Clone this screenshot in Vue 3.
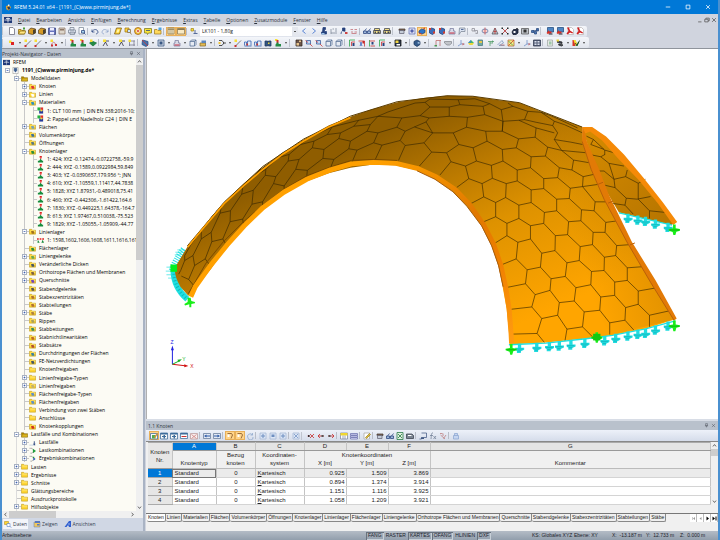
<script setup>
const navy = '#27427c'
const grey = '#7c8796'
// every glyph is a list of [fill, stroke, path] on a 16 x 16 grid
const glyphs = {
  Neu: [['#fff', '#667', 'M3 1h7l3 3v11H3z']],
  Öffnen: [['#f5c636', '#8a6a10', 'M1 14V5h5l2 2h5v7z'], ['#ffe680', '#8a6a10', 'M1 14l3-6h12l-3 6z'], ['#4a9b3c', 'none', 'M10 1h4v4h-4z']],
  Modell: [['#d59a28', '#59452a', 'M1 6l5-4 9 2v8l-6 3-8-2z'], ['#49412f', 'none', 'M10 6l5-2v8l-5 3z']],
  Speichern: [['#6874bd', '#38447f', 'M1 2h14v13H1z'], ['#eef', 'none', 'M4 2h8v5H4zM4 10h8v5H4z']],
  Kopie: [['#ddd6cb', '#8c7767', 'M2 2h12v12H2z'], ['#8c7767', 'none', 'M4 4h8v3H4z']],
  Drucken: [['#e7ecf5', grey, 'M4 1h8v5H4zM1 6h14v6H1zM4 10h9v5H4z']],
  Vorschau: [['#fff', grey, 'M2 1h9v13H2z'], ['#a9d6ee', navy, 'M7 7h6v5H7zM12 12l3 3']],
  Rückgängig: [['none', navy, 'M2 5v5h5M2 10c2-6 11-7 12 0 0 2-1 3-4 4']],
  Wiederholen: [['none', '#8ba0c7', 'M14 5v5H9M14 10C12 4 3 3 2 10c0 2 1 3 4 4']],
  Fläche: [['#ffd43a', '#7b5a10', 'M1 14L5 2h10l-4 12z'], ['#fff7b0', 'none', 'M5 11l2-6h4l-2 6z']],
  Suche: [['#ffd43a', '#a07818', 'M2 2h8v8H2z'], ['#c8e4ff', '#8a6a30', 'M7 5h6v6H7zM12 11l3 4']],
  Kreis: [['#f4c52f', '#9c5b18', 'M8 1a7 7 0 100 14A7 7 0 008 1z'], ['#d33b2a', '#fff', 'M8 5a3 3 0 100 6 3 3 0 000-6z']],
  Notiz: [['#f8e33a', '#7d781e', 'M1 3h14v9H9l-2 3-1-3H1z'], ['none', navy, 'M4 7h8']],
  Ordner: [['#ffd95b', '#a07c20', 'M1 14V5h5l2 2h6v7z'], ['#4fa2e0', 'none', 'M9 1h6v5H9z']],
  Tabelle: [['#fff5d6', '#8c7a52', 'M2 2h12v12H2z'], ['none', '#8c7a52', 'M2 5h12M6 2v12M10 2v12']],
  Fenster: [['#f8e9c4', '#8c7a52', 'M1 3h14v11H1z'], ['#8c7a52', 'none', 'M1 3h14v3H1z']],
  Lastfall: [['#f9dd38', '#a48a20', 'M2 3h5v5H2z'], [navy, navy, 'M10 6v6M7 13h8']],
  Zurück: [['none', '#2b63c9', 'M11 3L5 8l6 5']],
  Weiter: [['none', '#2b63c9', 'M5 3l6 5-6 5']],
  Last: [[navy, navy, 'M6 1h5v4H9v4h4v5H3v-4h2z'], ['#9cc3e6', 'none', 'M3 12h6v3H3z']],
  Maß: [['none', grey, 'M2 4v10M2 12h12M5 4h3M10 4h4M10 8h4']],
  Zeiger: [[navy, navy, 'M5 2h5v6H5zM3 9l-1 5M9 9l5 4'], ['#c44', 'none', 'M10 10h5v4h-5z']],
  Werte: [['none', '#c06a70', 'M1 5h5M9 5h5M2 10h4M9 10h5M3 13h10']],
  Brille: [['#9db6da', navy, 'M1 8h6v5H1zM9 8h6v5H9zM3 8l4-5M11 8l4-5']],
  Drucker: [['#f2df86', '#3d4350', 'M3 3h10v4H3zM1 7h14v6H1z'], ['#3d4350', 'none', 'M3 9h3v3H3zM9 9h4v3H9z']],
  Box: [['#7c6656', '#4a3c34', 'M2 4h12v3H2z'], ['#c4ccd8', '#667', 'M3 7h9v6H3z']],
  Raute: [['#dcdff2', '#6674b4', 'M2 2h12v12H2z'], ['#5261ad', 'none', 'M8 4l4 4-4 4-4-4z']],
  Körper: [['#2f75c8', '#1d447c', 'M2 8l5-4 7 2v5l-6 3-6-2z'], ['#d93b2a', 'none', 'M2 11l5 2v2l-5-2zM9 3l5-2v3z']],
  Würfel: [['#3a6db9', '#1e3f78', 'M3 5l4-3 6 2v8l-4 3-6-3z'], ['#db3b2c', 'none', 'M2 2h4v4H2zM10 9h4v4h-4z']],
  Profil: [['#d8dbe8', '#7c7fa0', 'M4 3h7v5h3v6H2V8h2z'], ['#c34', 'none', 'M3 11h10v2H3z']],
  Fahne: [['#dce4f2', grey, 'M3 2h11v7H6l-4 6z'], ['none', navy, 'M6 5h5']],
  Kette: [['none', '#8b8b94', 'M2 3h5v5H2zM8 7h5v6H9M6 7l4 4']],
  Spiegel: [['#f6d3d0', '#5874a6', 'M2 8a6 4 0 1012 0A6 4 0 002 8z'], ['none', '#c44', 'M8 1v14']],
  Dreieck: [['#bfc2c9', '#50545e', 'M8 2l6 12H2z'], ['none', '#b33', 'M8 2v12M5 9h6']],
  Kreuz: [['none', '#aa2222', 'M2 2l12 12M14 2L2 14'], ['#222', 'none', 'M1 1h3v3H1zM12 1h3v3h-3zM1 12h3v3H1zM12 12h3v3h-3z']],
  Ring: [['#27334e', '#10182c', 'M5 5h9v7l-4 3H4l-2-5z'], ['#fff', 'none', 'M5 8h4v4H5z'], ['none', '#222', 'M9 5l3-3 3 3']],
  Kamera: [['#bfc3c9', '#555', 'M1 3h14v11H1z'], ['#333', 'none', 'M5 5h6v6H5z']],
  Gelenk: [['#4b78b8', '#294a7c', 'M1 7h5v4H1zM7 9h4v5H7zM11 3h4v5h-4zM5 8l8-2']],
  Export: [['#4d86c4', '#214b7d', 'M3 1h12v9H3z'], ['#d93025', 'none', 'M1 12l5-6v3h5v4H5v2z'], ['#223', 'none', 'M6 13h7v2H6z']],
  PDF: [['#fff', '#bcb4b4', 'M4 1h7l4 4v10H4z'], ['#cf2020', 'none', 'M2 1h4l2 6 6 4-1 2-5-2-5 4-2-2 4-5z']],
  Knoten: [['#f6df35', 'none', 'M2 3h5v5H2z'], ['#d22', 'none', 'M6 6h6v6H6z']],
  Linie: [['#f6df35', 'none', 'M1 1h5v5H1z'], ['none', '#555', 'M3 14L14 3'], ['#c33', 'none', 'M1 12h4v4H1z']],
  Bogen: [['#f6df35', 'none', 'M1 1h5v5H1z'], ['none', '#b66', 'M3 13c1-8 7-9 8-1'], ['#c33', 'none', 'M2 11h4v4H2zM10 10h4v4h-4z']],
  Lager: [['#f6df35', 'none', 'M2 0h5v4H2z'], ['#cc2f28', 'none', 'M5 2h4v6H5z'], ['#238b45', 'none', 'M7 6l3 4h4v5H3v-4z']],
  Bettung: [['#238b45', '#177235', 'M1 8l7-3 7 3-7 6z'], ['#f6df35', 'none', 'M2 1h5v5H2z']],
  Stab: [['#f6df35', 'none', 'M2 1h6v5H2z'], ['none', '#223', 'M2 14l5-8 4 8M8 4h6']],
  Gitter: [['none', '#778', 'M3 3v11M12 3v11M2 4h12M2 12h12'], ['#f6df35', 'none', 'M1 1h5v5H1z']],
  Netz: [['#4974ac', '#284d82', 'M3 2l11 3v7l-4 3-8-4z'], ['none', '#c33', 'M2 2l12 12']],
  Rahmen: [['#cbd3e1', '#395884', 'M2 2h12v12H2z'], ['#395884', 'none', 'M5 5h6v6H5z']],
  Ebene: [['#e3ba52', '#876e32', 'M2 8h11v6H2z'], ['#5d86bd', 'none', 'M5 3h9v5H5z']],
  Strahl: [['none', '#222', 'M2 3h6l4 5-4 5H2M10 8h6'], ['#f5c636', 'none', 'M1 6h4v4H1z']],
  Linienlast: [['none', '#295bb1', 'M1 13V6h4v7M7 13V4h7v9M1 14h14'], ['#d6342a', 'none', 'M5 9h3v4H5z']],
  Fernglas: [['#335685', '#1d385f', 'M2 4h5v10H2zM9 4h5v10H9zM6 6h4'], ['#e7d339', 'none', 'M8 7h3v3H8z']],
  Gitternetz: [['#6d574c', '#34271f', 'M2 2h12v12H2z'], ['#e6c48d', 'none', 'M3 8h5v5H3zM8 3h4v3H8z']],
  Lupe: [['#c1d6f2', '#345a98', 'M3 3h8v7H3z'], ['none', '#c33', 'M10 10l5 5M1 3l5 4']],
  Quader: [['#e6ebf3', '#526c93', 'M2 5h9v9H2zM2 5l3-3h9v9l-3 3M11 5l3-3']],
  AchseX: [['none', '#23a33d', 'M3 15V2h11'], ['none', '#c92828', 'M7 14V6h7'], [navy, 'none', 'M9 8h4v6H9z']],
  AchseY: [['none', '#c92828', 'M1 4h12v11'], ['none', '#214fb5', 'M4 6l4 8M8 6l-4 8'], ['#c92828', 'none', 'M9 4h4v5H9z']],
  AchseZ: [['none', '#23a33d', 'M3 15V2'], ['none', '#c92828', 'M3 4h11M5 14h9'], [navy, 'none', 'M7 6h4v5H7z']],
  Ansicht: [['#2d394c', '#111', 'M2 2h12v12H2z'], ['#f2d645', 'none', 'M3 3h6v5H3z'], ['#fff', 'none', 'M5 10h7v3H5z']],
  Kugel: [['#345b8c', '#1b375c', 'M8 2l6 3v6l-6 4-6-4V5z'], ['#a9c8e6', 'none', 'M8 8l5-3v5z']],
  Schnitt: [['none', '#b66', 'M4 14V3h10M12 3v11'], ['#499854', 'none', 'M1 12h5v3H1z']],
  Schild: [['#c2c5ca', '#83878e', 'M1 5h14v4l-4 3H6L1 8z']],
  Koordinaten: [['none', '#688bc5', 'M8 2v8l-6 4M8 10h7'], ['#c66', 'none', 'M11 8l4 2-4 3z']],
  Farben: [['#43b86b', 'none', 'M8 2l6 6H2z'], ['#ecd83d', 'none', 'M2 8h12l-3 4H5z'], ['#3f84cc', 'none', 'M2 8l6-6v5z']],
  Zellen: [['#6ea9a3', '#49767c', 'M2 2h9v11H2z'], ['#e4c64c', 'none', 'M4 4h6v4H4z']],
  Pfeil: [['none', '#4c9a63', 'M2 5h12M6 5v9M6 8h6M11 3v4']],
  Skizze: [['none', '#7893b8', 'M1 12l9-9 3 5-9 5h11'], ['none', '#bd6c6c', 'M7 12h8']],
  Palette: [['#f3ec86', '#b46a35', 'M2 2h12v12H2z'], ['none', '#d6342a', 'M3 13L14 2'], ['none', '#3a9b4a', 'M3 4l9 9']],
  Raster: [['#566078', '#303950', 'M1 2h14v12H1z'], ['#d9e0ed', 'none', 'M3 4h4v3H3zM9 4h4v3H9zM3 9h4v3H3zM9 9h4v3H9z']],
  Blatt: [['#e6e9e5', '#a2aaa6', 'M3 2h10v12H3z'], ['#9dc7a9', 'none', 'M6 5h5v6H6z']],
  Schrauben: [['#424c5b', '#222', 'M3 4l9 2v3L3 7zM6 10l8 2-3 2-6-2z'], ['#e7d339', 'none', 'M1 1h5v4H1z']],
  Spektrum: [['#d6342a', 'none', 'M1 2h5l4 8-4 4H1z'], ['#f4df32', 'none', 'M3 2h4l3 7-3 5z'], ['#3aa349', 'none', 'M7 14l5-8 3-1-4 9z'], ['none', '#222', 'M6 8l4 5 5-10']],
  Bearbeiten: [['#f8f8f8', '#3e6c9b', 'M1 3h14v11H1z'], ['#55aa4c', 'none', 'M4 6h7v7H4z'], ['#d1923d', 'none', 'M8 10l6-8 2 2-6 8z']],
  Spalte: [['#f8f8f8', '#3e6c9b', 'M1 2h14v12H1z'], ['#3e6c9b', 'none', 'M1 2h14v3H1zM7 6h3v7H7zM4 8h8v2H4z']],
  Zeile: [['#fff', '#3e6c9b', 'M1 2h14v11H1z'], ['#3e6c9b', 'none', 'M1 2h14v3H1z'], ['#c33', 'none', 'M3 8h10v2H3z']],
  ZeileX: [['#f7eeee', '#b99', 'M1 3h14v11H1z'], ['none', '#c77', 'M3 5l10 8M13 5L3 13']],
  NachLinks: [['#e3eaf5', '#64799b', 'M1 3h14v10H1z'], ['#2d59a6', 'none', 'M7 5v6L2 8zM7 7h7v2H7z']],
  NachRechts: [['#e3eaf5', '#64799b', 'M1 3h14v10H1z'], ['#2d59a6', 'none', 'M9 5v6l5-3zM2 7h7v2H2z']],
  Haken: [['none', '#7a4b22', 'M3 3h8l2 3-3 7'], ['#fff', 'none', 'M3 5h4v5H3z']],
  Kreislauf: [['none', '#8ba6cb', 'M13 6A5 5 0 104 12M13 2v4H9M4 12a5 5 0 0010-2']],
  Plus: [['#dce6f6', '#a4b6d3', 'M2 2h12v12H2z'], ['#6d8ec0', 'none', 'M7 4h2v8H7zM4 7h8v2H4z']],
  Minus: [['#dce6f6', '#a4b6d3', 'M2 2h12v12H2z'], ['#6d8ec0', 'none', 'M5 5h6v5H5z']],
  Löschen: [['#dce6f6', '#a4b6d3', 'M2 2h12v12H2z'], ['none', '#6d8ec0', 'M4 4l8 8M12 4l-8 8']],
  RotX: [['none', '#c42323', 'M1 8h5M6 4l8 8M14 4l-8 8'], ['#333', 'none', 'M2 6h3v4H2z']],
  RotLinks: [['none', '#c42323', 'M2 8h12M6 4L2 8l4 4'], ['#555', 'none', 'M9 6h4v4H9z']],
  RotRechts: [['none', '#c42323', 'M2 8h12M10 4l4 4-4 4'], ['#555', 'none', 'M3 6h4v4H3z']],
  Kopfzeile: [['#fff', '#7b86a0', 'M1 2h14v12H1z'], ['#f1d72e', 'none', 'M1 2h14v5H1z'], ['none', '#7b86a0', 'M6 7v7M10 7v7']],
  Zeilen: [['#e2e4ff', '#6b70ac', 'M1 3h14v3H1zM1 7h14v3H1zM1 11h14v3H1z']],
  Stift: [['#fff', '#aaa', 'M2 2h11v12H2z'], ['#e0c23d', '#998030', 'M5 11l8-8 2 2-8 8z']],
  Excel: [['#dff0df', '#207641', 'M2 1h12v14H2z'], ['none', '#19733a', 'M4 4l8 8M12 4l-8 8']],
  Formel: [['none', '#6f7e94', 'M8 2c-4-1-3 5-4 12M2 7h6M9 8l5 6M14 8l-5 6']],
  FormelX: [['none', '#b77', 'M2 3h5M3 6l9 8M14 6l-5 7M8 3v5']],
  Tafel: [['#7b8492', '#39404c', 'M1 4h11l3 3v6H1z'], ['#fff', 'none', 'M4 6h7v2H4z']],
  Kurve: [['none', '#445a84', 'M5 2h10v9H5v3H1'], ['#445a84', 'none', 'M4 11h6v3H4z']],
  Schloss: [['#c5d5f0', '#8ca6d1', 'M3 7h10v7H3zM5 7V3h6v4']],
}
// "|" separator, "‖" new bar, "v" drop-down arrow, "*" pressed, "[]" load case box
const bar1 = 'Neu Öffnen Modell Modell Speichern Kopie Drucken Vorschau | Rückgängig Wiederholen | Fläche Suche Kreis Notiz Ordner | Tabelle* Fenster* | Lastfall [] Zurück Weiter Last Maß Zeiger Werte | Brille Drucker Drucker ‖ Box Raute Körper* Würfel Würfel Profil Fahne | Kette Spiegel Dreieck Kreuz Ring Kamera Gelenk ‖ Export Export PDF PDF'.split(' ')
const bar2 = 'Knoten v Linie Linie v Bogen v | Lager Lager Bettung | Stab v Stab Gitter | Netz v Rahmen v Profil v Quader Ebene v | Strahl v Linie Linienlast Linienlast Fernglas Lager v ‖ Gitternetz Lupe Lupe Quader Quader | AchseX AchseY AchseZ AchseX v Ansicht v | Kugel v ‖ Schnitt Schild | Koordinaten Farben Zellen Pfeil Skizze Palette v Koordinaten Raster | Blatt Schrauben v Spektrum v'.split(' ')
const bar3 = 'Bearbeiten* Spalte Spalte Zeile ZeileX | NachLinks NachRechts | Haken* Haken* Kreislauf | Plus Minus Plus | Löschen ‖ RotX RotLinks RotRechts | Kopfzeile Zeilen | Stift | Box Brille Excel Tafel | Kurve Formel FormelX | Schloss'.split(' ')

const menu = ['Datei', 'Bearbeiten', 'Ansicht', 'Einfügen', 'Berechnung', 'Ergebnisse', 'Extras', 'Tabelle', 'Optionen', 'Zusatzmodule', 'Fenster', 'Hilfe']

// level, toggle, icon, text
const tree = [
  [0, '', 'app', 'RFEM'],
  [1, '-', 'model', '1191_(C)www.pirminjung.de*'],
  [2, '-', 'open', 'Modelldaten'],
  [3, '+', 'f:#d33', 'Knoten'],
  [3, '+', 'f:#fff', 'Linien'],
  [3, '-', 'f:#2a8fc0', 'Materialien'],
  [4, '', 'mat', '1: CLT 100 mm | DIN EN 338:2016-10;'],
  [4, '', 'mat', '2: Pappel und Nadelholz C24 | DIN E'],
  [3, '+', 'f:#78a0b8', 'Flächen'],
  [3, '', 'f:#3a6fa0', 'Volumenkörper'],
  [3, '', 'f:#5a7880', 'Öffnungen'],
  [3, '-', 'f:#2a8c3a', 'Knotenlager'],
  [4, '', 'sup', '1: 424; XYZ -0.12474,-0.0722758,-59.9'],
  [4, '', 'sup', '2: 444; XYZ -0.1589,0.0922984,59.849'],
  [4, '', 'sup', '3: 403; YZ -0.0390657,179.956 °; JNN'],
  [4, '', 'sup', '4: 610; XYZ -1.10559,1.11417,44.7838'],
  [4, '', 'sup', '5: 1828; XYZ 1.87931,-0.489018,75.41'],
  [4, '', 'sup', '6: 460; XYZ -0.442306,-1.61422,164.6'],
  [4, '', 'sup', '7: 1830; XYZ -0.449225,1.64378,-164.7'],
  [4, '', 'sup', '8: 613; XYZ 1.97467,0.510038,-75.523'],
  [4, '', 'sup', '9: 1829; XYZ -1.05055,-1.05909,-44.77'],
  [3, '-', 'f:#a07020', 'Linienlager'],
  [4, '', 'lin', '1: 1598,1602,1606,1608,1611,1616,161'],
  [3, '', 'f:#2a8c3a', 'Flächenlager'],
  [3, '+', 'f:#6aa84f', 'Liniengelenke'],
  [3, '', 'f:#445566', 'Veränderliche Dicken'],
  [3, '+', 'f:#806040', 'Orthotrope Flächen und Membranen'],
  [3, '+', 'f:#7044c0', 'Querschnitte'],
  [3, '', 'f:#555', 'Stabendgelenke'],
  [3, '', 'f:#b07030', 'Stabexzentrizitäten'],
  [3, '', 'f:#b07030', 'Stabteilungen'],
  [3, '+', 'f:#b08040', 'Stäbe'],
  [3, '', 'f:#a8a060', 'Rippen'],
  [3, '', 'f:#3a8c5a', 'Stabbettungen'],
  [3, '', 'f:#c06a20', 'Stabnichtlinearitäten'],
  [3, '', 'f:#b05030', 'Stabsätze'],
  [3, '', 'f:#3a80a0', 'Durchdringungen der Flächen'],
  [3, '', 'f:#445566', 'FE-Netzverdichtungen'],
  [3, '', 'f:', 'Knotenfreigaben'],
  [3, '+', 'f:', 'Linienfreigabe-Typen'],
  [3, '+', 'f:#c0b070', 'Linienfreigaben'],
  [3, '', 'f:#5f8fc8', 'Flächenfreigabe-Typen'],
  [3, '', 'f:#5f8fc8', 'Flächenfreigaben'],
  [3, '', 'f:', 'Verbindung von zwei Stäben'],
  [3, '', 'f:', 'Anschlüsse'],
  [3, '', 'f:#d03020', 'Knotenkopplungen'],
  [2, '-', 'open', 'Lastfälle und Kombinationen'],
  [3, '+', 'lf', 'Lastfälle'],
  [3, '+', 'lk', 'Lastkombinationen'],
  [3, '+', 'ek', 'Ergebniskombinationen'],
  [2, '+', 'f:', 'Lasten'],
  [2, '+', 'f:', 'Ergebnisse'],
  [2, '+', 'f:', 'Schnitte'],
  [2, '', 'f:', 'Glättungsbereiche'],
  [2, '', 'f:', 'Ausdruckprotokolle'],
  [2, '+', 'f:', 'Hilfsobjekte'],
]
const treeGlyphs = {
  app: [['#203a78', 'none', 'M0 2h16v12H0z'], ['none', '#fff', 'M8 3v10M2 8h12M4 5h8']],
  model: [['#fff', '#777', 'M2 1h12v14H2z'], ['#3a5f95', '#2a4570', 'M5 3h6v5l-3 4-3-4z']],
  open: [['#b38a00', '#6f5600', 'M1 14V4h5l2 2h7v8z'], ['#d9b422', 'none', 'M2 13l2-5h11l-1 5z']],
  mat: [['#25b040', 'none', 'M1 1h7v7H1z'], ['#e03030', 'none', 'M8 1h6v7H8z'], ['#233a9c', 'none', 'M5 8h9v7H5z'], ['#f4e030', 'none', 'M8 6h4v4H8z']],
  sup: [['#e02020', 'none', 'M6 0h5v4H6zM7 5h3v2H7z'], ['#168c3c', 'none', 'M8 6l4 5h2v4H2v-4h3z']],
  lin: [['#e02020', 'none', 'M0 3h4v3H0zM6 3h4v3H6zM12 3h4v3h-4z'], ['#168c3c', 'none', 'M2 6l4 7H1zM13 6l3 7h-6z']],
  lf: [['none', '#8aa0c8', 'M1 14h14'], ['#27427c', 'none', 'M11 5h2v6h2l-3 4-3-4h2z']],
  lk: [['none', '#555', 'M1 3h6l3 4v4l-3 3H3'], ['#1f9c3c', 'none', 'M9 4l7 5-7 5z']],
  ek: [['none', '#555', 'M1 3h6l3 4v4l-3 3H3'], ['#2a56b8', 'none', 'M10 5l5 4-5 4z'], ['#1f9c3c', 'none', 'M9 4h3v3H9z']],
}
const iconOf = (key) => {
  if (!key.startsWith('f:')) return treeGlyphs[key]
  const base = [['#ffd633', '#a8820c', 'M1 14V3h5l2 2h7v9z'], ['#ffe883', 'none', 'M3 6h11v2H3z']]
  const mark = key.slice(2)
  return mark ? [...base, [mark, 'none', 'M5 7h6v2h1v4H6v-3H5z']] : base
}

const rows = [
  [1, '0.925', '1.509', '3.869'],
  [2, '0.894', '1.374', '3.914'],
  [3, '1.151', '1.116', '3.925'],
  [4, '1.058', '1.209', '3.921'],
]
const sheets = ['Knoten', 'Linien', 'Materialien', 'Flächen', 'Volumenkörper', 'Öffnungen', 'Knotenlager', 'Linienlager', 'Flächenlager', 'Liniengelenke', 'Orthotrope Flächen und Membranen', 'Querschnitte', 'Stabendgelenke', 'Stabexzentrizitäten', 'Stabteilungen', 'Stäbe']
const snaps = [['FANG', 1], ['RASTER', 0], ['KARTES', 1], ['OFANG', 1], ['HLINIEN', 0], ['DXF', 1]]

// panel joints of the timber shell, one sheet of coordinates per part
const leftJoints = 'M620 182L595 178 550 210 540 235M550 210L517 207 470 243 468 265M470 243L435 240 400 290V303M400 290L368 283 335 338V352M335 338L303 345 275 390 277 404M275 390L237 398 215 450 222 462M215 450L182 458 162 510 173 525M162 510L130 530 112 572 127 590M112 572L90 562M650 125L600 155 595 178M600 155L565 147 520 180 517 207M520 180L485 175 445 210 435 240M445 210L412 215 375 262 368 283M375 262L343 258 307 303 303 345M307 303L272 315 238 365 237 398M238 365L207 372 180 430 182 458M180 430L150 450 125 500 130 530M125 500L100 515 88 545 82 556M660 105L610 110 570 130 565 147M570 130L530 135 490 155 485 175M490 155L450 165 415 195 412 215M415 195L380 205 345 240 343 258M345 240L310 260 275 295 272 315M275 295L240 325 210 355 207 372M210 355L180 385 150 425V450M150 425L120 465 100 500V515M610 110L625 92 683 80M530 135L545 112 625 92M450 165L468 148 545 112M380 205L395 190 468 148M310 260L330 240 395 190M240 325L262 302 330 240M180 385L200 362 262 302M120 465L200 362'
const midJoints = 'M5 218L20 182 70 160 95 167 75 210M95 167L150 153 165 168 145 213M165 168L222 160 245 188 208 230M245 188L290 190 303 217 270 257M303 217L347 230 357 268 320 295M357 268L397 283 402 323 360 345M402 323L438 340V383L402 398M438 383L472 403M472 440L437 462M50 125L83 130 70 160M83 130L140 113 165 125 150 153M165 125L193 112 248 130 222 160M248 130L310 130 327 165 290 190M327 165L370 175 380 215 347 230M380 215L425 228 428 267 397 283M428 267L470 283M468 325L438 340M50 125L60 105 83 80 155 85 140 113M155 85L210 78 237 85 228 97 193 112M228 97L248 130M237 85L298 80 353 83 350 113 310 130M350 113L408 125 412 155 370 175M412 155L458 180M460 215L425 228M83 80L113 67 195 40 225 38 240 52 210 78M225 38L240 28 325 30 330 45 298 52V80M240 52L298 52M330 45L400 50 405 75 353 83M405 75L460 95M458 125L408 125M400 50L420 42 455 60M325 30L375 27 420 42'
const rightJoints = 'M10 65L58 62 110 85 107 113 57 118 8 95ZM57 118L50 145 95 172 138 170 145 143 107 113M8 150L50 145M95 172L93 205 53 212 10 185 8 150M53 212V245L20 253M20 253L18 295 58 318 95 310V272L53 245M93 205L133 238 175 235 180 205 138 170M133 238V268L95 272M145 143L187 153 223 182 218 212 180 205M218 212L252 232 250 262 213 267 175 235M213 267L210 298 172 300 133 268M172 300V335L135 340 95 310M135 340L133 373 93 380 58 358V318M58 358L22 373V410L55 430 93 420V380M133 373L168 410 205 407 208 368 172 335M168 410L167 455 127 463 93 420M208 368L245 365 247 332 210 298M247 332L285 335 288 308 250 262M285 335L320 370 318 400 282 400 245 365M282 400L280 437 243 443 205 407M243 443L240 485 203 492 167 455M203 492L198 533 155 540 123 505 127 463M55 430L50 480 83 513 123 505M50 480L8 497M83 513L78 555 107 588 152 575 155 540M78 555L18 567M198 533L230 567 275 558 277 518 240 485M277 518L315 515 316 475 280 437M316 475L350 470 353 440 318 400M350 470L385 507V545L347 550 315 515M347 550V590L305 595 275 558M305 595L302 635 255 640 225 607 230 567M152 575L180 612 225 607M180 612L175 650 127 660 97 625 107 588M97 625L35 632M127 660L113 705 38 707M113 705L135 732M175 650L203 692 250 685 255 640M203 692L197 728M250 685L280 715M302 635L332 673 378 665 380 627 347 590M332 673V708M378 665L405 695M380 627L418 617V577L385 545M418 617L452 650V685M452 650L520 635M418 577L475 567M385 507L440 503M353 440L395 437M320 370L358 365M288 308L328 308M250 262L300 255M252 232L285 225M223 182L270 190M187 153L262 160M8 95L10 65 5 30 40 20 85 35 75 60 58 62M75 60L110 68 160 78 175 100 165 120 187 153M110 85L165 100M85 35L125 38 165 65 160 78M165 65L195 75 250 100M165 120L215 128 250 135M40 20L25 10M125 38L155 48 235 85'
const flapJoints = 'M262 110L283 120 317 152 345 160M317 152V166M283 120L275 135 315 150M270 165L305 172 330 192 375 200M305 172L318 165M330 192L345 240 380 232 385 212M300 215L315 215 345 240M345 240L348 265 382 297 415 300M348 265L305 255M380 232L418 252V300L452 335V358M418 252L440 240M415 300L455 292M452 335L500 340M382 297L378 318 403 345M378 318L335 312'
const lineSupports = [[60, 750], [112, 747], [150, 745], [180, 743], [215, 740], [257, 735], [317, 727], [350, 720], [387, 713], [417, 708], [440, 705], [470, 695], [508, 683], [387, 358], [417, 363], [440, 367], [470, 375], [508, 385]]
const nodeSupports = [[35, 753], [293, 717], [527, 682], [527, 392]]
</script>

<template>
  <div class="window">
    <header class="title">
      <svg class="logo" viewBox="0 0 16 16"><path fill="#e0a030" d="M2 5l6-3 6 5-5 8-6-3z" /><path fill="#2b3b55" d="M5 7l5-2 2 5-4 3z" /><path fill="#fff" d="M7 1h3v4H7z" /></svg>
      <h1>RFEM 5.24.01 x64 - [1191_(C)www.pirminjung.de*]</h1>
      <button aria-label="Minimieren"><svg viewBox="0 0 16 16"><path d="M2 8h12" /></svg></button>
      <button aria-label="Maximieren"><svg viewBox="0 0 16 16"><path d="M3 3h10v10H3z" /></svg></button>
      <button aria-label="Schließen"><svg viewBox="0 0 16 16"><path d="M3 3l10 10M13 3L3 13" /></svg></button>
    </header>

    <nav class="menu">
      <svg class="menu-logo" viewBox="0 0 16 12"><path fill="#203a78" d="M0 0h16v12H0z" /><path stroke="#fff" fill="none" stroke-width="1.5" d="M8 1v10M1 6h14M4 3h8" /></svg>
      <button v-for="m in menu" :key="m"><u>{{ m[0] }}</u>{{ m.slice(1) }}</button>
      <span class="mdi">
        <button aria-label="Fenster minimieren"><svg viewBox="0 0 16 16"><path d="M3 13h9" /></svg></button>
        <button aria-label="Fenster verkleinern"><svg viewBox="0 0 16 16"><path d="M5 6V3h9v7h-3M2 6h9v7H2z" /></svg></button>
        <button aria-label="Fenster schließen"><svg viewBox="0 0 16 16"><path d="M3 3l10 10M13 3L3 13" /></svg></button>
      </span>
    </nav>

    <div v-for="(bar, b) in [bar1, bar2]" :key="b" class="toolbar">
      <div class="strip">
        <i class="grip"></i>
        <template v-for="(t, i) in bar" :key="i">
          <i v-if="t === '|'" class="sep"></i>
          <i v-else-if="t === '‖'" class="grip"></i>
          <button v-else-if="t === 'v'" class="drop" aria-label="Auswahl"></button>
          <select v-else-if="t === '[]'" class="loadcase" aria-label="Lastfall"><option>LK101 - 1,80g</option></select>
          <button v-else class="tool" :class="{ pressed: t.endsWith('*') }" :aria-label="t.replace('*', '')">
            <svg viewBox="0 0 16 16"><path v-for="(p, k) in glyphs[t.replace('*', '')]" :key="k" :fill="p[0]" :stroke="p[1]" :d="p[2]" /></svg>
          </button>
        </template>
      </div>
    </div>

    <main>
      <aside>
        <div class="caption"><h2>Projekt-Navigator - Daten</h2>
          <button aria-label="Anheften"><svg viewBox="0 0 16 16"><path d="M5 2h6v7H5zM3 9h10M8 9v5" /></svg></button>
          <button aria-label="Navigator schließen"><svg viewBox="0 0 16 16"><path d="M3 3l10 10M13 3L3 13" /></svg></button>
        </div>
        <div class="navigator">
          <ul class="tree">
            <li v-for="(r, i) in tree" :key="i" :class="'l' + r[0]">
              <span v-if="r[0]" class="toggle" :class="{ stub: r[0] > 1 }">
                <button v-if="r[1]" :aria-label="r[1] === '+' ? 'Aufklappen' : 'Zuklappen'"><svg viewBox="0 0 10 10"><path :d="r[1] === '+' ? 'M2 5h6M5 2v6' : 'M2 5h6'" /></svg></button>
              </span>
              <svg class="node" viewBox="0 0 16 16"><path v-for="(p, k) in iconOf(r[2])" :key="k" :fill="p[0]" :stroke="p[1]" :d="p[2]" /></svg>
              <span class="label">{{ r[3] }}</span>
            </li>
          </ul>
          <div class="vscroll">
            <button aria-label="Nach oben"><svg viewBox="0 0 16 16"><path d="M3 11l5-6 5 6" /></svg></button>
            <div class="thumb tree-thumb"></div>
            <button class="end" aria-label="Nach unten"><svg viewBox="0 0 16 16"><path d="M3 5l5 6 5-6" /></svg></button>
          </div>
        </div>
        <div class="hscroll">
          <button aria-label="Nach links"><svg viewBox="0 0 16 16"><path d="M11 3L5 8l6 5" /></svg></button>
          <div class="hthumb"></div>
          <button class="end" aria-label="Nach rechts"><svg viewBox="0 0 16 16"><path d="M5 3l6 5-6 5" /></svg></button>
        </div>
        <div class="views">
          <button class="on"><svg viewBox="0 0 16 16"><path fill="#ffd633" stroke="#a8820c" d="M1 3h8v6H1z" /><path fill="#fff" stroke="#3a6fc0" d="M6 7h6v6H6zM12 13l3 2" /></svg>Daten</button>
          <button><svg viewBox="0 0 16 16"><path fill="#f0c860" stroke="#5f7ab0" d="M2 4h12v10H2z" /><path fill="#5878c0" d="M4 2h10v4H4zM8 8h5v3H8z" /></svg>Zeigen</button>
          <button><svg viewBox="0 0 16 16"><path fill="#2f5fd0" d="M1 14L10 2h4v12h-4l-1-3H7l-2 3z" /><path fill="#fff" d="M9 7h2v2H9z" /></svg>Ansichten</button>
        </div>
      </aside>

      <section class="work">
        <div class="view">
          <svg viewBox="147 49 571 372" preserveAspectRatio="xMidYMid meet">
            <defs>
              <linearGradient id="shell" gradientUnits="userSpaceOnUse" x1="405" y1="125" x2="500" y2="335">
                <stop offset="0" stop-color="#8f5d00" /><stop offset=".3" stop-color="#bd7b00" /><stop offset=".55" stop-color="#de9200" /><stop offset="1" stop-color="#ffa500" />
              </linearGradient>
              <linearGradient id="shade" gradientUnits="userSpaceOnUse" x1="560" y1="190" x2="690" y2="150">
                <stop offset="0" stop-color="#a86c00" stop-opacity="0" /><stop offset="1" stop-color="#a86c00" stop-opacity=".6" />
              </linearGradient>
              <linearGradient id="flap" gradientUnits="userSpaceOnUse" x1="590" y1="135" x2="665" y2="220">
                <stop offset="0" stop-color="#d48a00" /><stop offset="1" stop-color="#b87600" />
              </linearGradient>
              <linearGradient id="rim" gradientUnits="userSpaceOnUse" x1="380" y1="160" x2="510" y2="340">
                <stop offset="0" stop-color="#ffa000" /><stop offset=".45" stop-color="#e07800" /><stop offset=".7" stop-color="#f08000" /><stop offset="1" stop-color="#ff9a10" />
              </linearGradient>
            </defs>

            <!-- supports at the left foot -->
            <g transform="translate(150 90) scale(.33333)">
              <path fill="none" stroke="#20e0e0" stroke-width="22" stroke-dasharray="3 4" d="M98 482Q72 515 62 548" />
              <path fill="none" stroke="#20e0e0" stroke-width="18" d="M66 545Q68 598 108 632" />
              <path fill="none" stroke="#0fb8bc" stroke-width="10" stroke-dasharray="3 7" d="M66 545Q68 598 108 632" />
              <path fill="none" stroke="#20e0e0" stroke-width="2" d="M45 535h20M43 547h22M45 558h20M50 568h15M72 490h24M78 483h22M70 498h20" />
            </g>

            <!-- shell surface -->
            <path fill="url(#flap)" d="M583.300 128L600 134 623 155 643 178 675 224 673 226 620 213.300 606 190 588 144Z" />
            <path fill="url(#shell)" d="M174 268L186 248 203 227 223 203 243 184 262 168 283 153 303 140 328 126 350 117 370 110 397 102.500 425 98 447 96 473 96.500 500 100.500 520 103 550 115 583 127.500 584 144 594 170 607 200 630 243 654 284 676 321 647 330 613 336.700 587 340 547 344 510 346 509.500 335 507 310 503 288 499 267 492 247 482 227 467 207 453 192.500 435 180 417 171 395 166 373 165 350 168.500 328 174 306 182 283 193 262 208 243 226 225 247 210 270 193.300 290 187 297 179 288Q172 276 174 268Z" />
            <path fill="url(#shade)" d="M500 100.500L550 115 583 127.500 584 144 594 170 607 200 630 243 654 284 676 321 613 336 540 240Z" />

            <g fill="none" stroke="#352400" stroke-width="1.900">
              <path transform="translate(150 90) scale(.33333)" :d="leftJoints" />
              <path transform="translate(350 90) scale(.33333)" :d="midJoints" />
              <path transform="translate(500 100) scale(.33333)" :d="rightJoints" />
              <path transform="translate(500 100) scale(.33333)" :d="flapJoints" />
            </g>

            <!-- rims -->
            <path fill="none" stroke="#5a3b00" stroke-width="1" d="M186 247L223 203 262 167 303 139.500 350 116.500 397 102 447 96 473 96.500 520 103 583 127.500" />
            <path fill="none" stroke="#ffa000" stroke-width="1.700" d="M186.500 248L203 228 223 204.500 243 186 262 170 283 154 303 141.500 328 127.500 350 118" />
            <path fill="none" stroke="#7a4a00" stroke-width="1" d="M187 295L205 264 222 243 242 223 262 206 283 190 306 176.500 330 167.500 351 161 373 160 397 161" />
            <path fill="none" stroke="url(#rim)" stroke-width="5" stroke-linejoin="round" d="M189.500 298L194 288 209 267 226 246 243 227 262 208.500 283 193 306 180 330 170.500 351 164.500 373 163 396 164 417 169 436 177.500 455 190 469.500 205 483.500 225 494 245.500 501 266 506 288 509.500 310 511.500 335 512 345" />
            <path fill="none" stroke="#a45c10" stroke-width="1" d="M417 171.500L435 180 453 192.500 467 207 482 227 492 247 499 267 503.500 288" />
            <path fill="#f58a08" d="M583 127.500L593 127.500 607 137 625 155 645 179 664 203 678.500 223 674.500 226 659 204 640 181 620 160 603 141 591 132 586 134Z" />
            <path fill="#e27a06" d="M583 127L586 134 588 143 600 170 610 196 633 243 657 282 678 320 675.500 322 652 284 628 243 605 200 592 170 583 142Z" />
            <path fill="none" stroke="#b86008" stroke-width="1" d="M583 142L592 170 605 200 628 243 652 284 675.500 322M599 185l5-2M609 204l5-2M631 246l5-2" />

            <!-- supports -->
            <g transform="translate(500 100) scale(.33333)">
              <path fill="none" stroke="#20e0e0" stroke-width="4" d="M28 739L140 734 260 721 340 711 440 691 530 667M360 341L520 378" />
              <g v-for="(s, i) in lineSupports" :key="'l' + i" :transform="`translate(${s[0]} ${s[1]})`">
                <path fill="#20dce0" d="M-5-14H5V-2H14V4L4 9V14H-8V8L-13 4V-2H-5Z" /><path fill="none" stroke="#10a8b0" stroke-width="2" d="M-12 2h22M-6 8h10" />
              </g>
              <g v-for="(s, i) in nodeSupports" :key="'n' + i" :transform="`translate(${s[0]} ${s[1]})`">
                <path fill="#19ee19" d="M-4-16H4V-4L17-2V3L6 6L3 16H-3L-5 7L-17 3V-2L-4-4Z" /><path stroke="#0b9b0b" stroke-width="2" d="M-14 1h28" />
              </g>
              <path fill="#12c812" d="M282 706h22v20h-22z" />
            </g>
            <g transform="translate(150 90) scale(.33333)">
              <path fill="#00f020" d="M57 527h20v22H57z" />
              <path fill="#19ee19" d="M109 627h9l2 10 11 3v4l-11 2v10h-6v-9l-13 4-2-5 10-6z" />
            </g>

            <!-- axes -->
            <g fill="none" stroke-width="1">
              <path stroke="#2020e0" d="M171 366v-15" /><path fill="#2020e0" d="M169.500 352l1.500-5 1.500 5z" />
              <path stroke="#d01010" d="M171 366l13 1.500" /><path fill="#d01010" d="M183 366l4 1.800-4 1.200z" />
              <path stroke="#10b020" d="M171 366l7-3.500" /><path fill="#10b020" d="M176 361.500l4.500-.5-3 3z" />
            </g>
            <g class="axis">
              <text x="169" y="346" fill="#2020e0">Z</text><text x="181" y="363" fill="#10b020">Y</text><text x="189" y="370" fill="#d01010">X</text>
            </g>
          </svg>
        </div>

        <div class="caption data-caption"><h2>1.1 Knoten</h2>
          <button aria-label="Anheften"><svg viewBox="0 0 16 16"><path d="M5 2h6v7H5zM3 9h10M8 9v5" /></svg></button>
          <button aria-label="Tabelle schließen"><svg viewBox="0 0 16 16"><path d="M3 3l10 10M13 3L3 13" /></svg></button>
        </div>
        <div class="strip table-strip">
          <template v-for="(t, i) in bar3" :key="i">
            <i v-if="t === '|'" class="sep"></i>
            <i v-else-if="t === '‖'" class="grip"></i>
            <button v-else class="tool" :class="{ pressed: t.endsWith('*') }" :aria-label="t.replace('*', '')">
              <svg viewBox="0 0 16 16"><path v-for="(p, k) in glyphs[t.replace('*', '')]" :key="k" :fill="p[0]" :stroke="p[1]" :d="p[2]" /></svg>
            </button>
          </template>
        </div>

        <div class="sheet">
          <table>
            <colgroup><col class="c0" /><col class="ca" /><col class="cb" /><col class="cc" /><col class="cd" /><col class="cd" /><col class="cd" /><col /></colgroup>
            <thead>
              <tr class="letters"><th rowspan="3" class="corner">Knoten<br />Nr.</th><th class="sel">A</th><th>B</th><th>C</th><th>D</th><th>E</th><th>F</th><th>G</th></tr>
              <tr><th></th><th>Bezug</th><th>Koordinaten-</th><th colspan="3" class="span">Knotenkoordinaten</th><th></th></tr>
              <tr class="units"><th>Knotentyp</th><th>knoten</th><th>system</th><th class="open">X [m]</th><th class="open">Y [m]</th><th>Z [m]</th><th>Kommentar</th></tr>
            </thead>
            <tbody>
              <tr v-for="r in rows" :key="r[0]" :class="{ current: r[0] === 1 }">
                <th>{{ r[0] }}</th><td>Standard</td><td class="center">0</td><td><u>K</u>artesisch</td><td class="num">{{ r[1] }}</td><td class="num">{{ r[2] }}</td><td class="num">{{ r[3] }}</td><td></td>
              </tr>
            </tbody>
          </table>
          <div class="vscroll">
            <button aria-label="Nach oben"><svg viewBox="0 0 16 16"><path d="M3 11l5-6 5 6" /></svg></button>
            <div class="thumb"></div>
            <button class="end" aria-label="Nach unten"><svg viewBox="0 0 16 16"><path d="M3 5l5 6 5-6" /></svg></button>
          </div>
        </div>
        <div class="sheets">
          <button v-for="(s, i) in sheets" :key="s" :class="{ on: i === 0 }">{{ s }}</button>
          <span class="pager"><button aria-label="Erste"><svg viewBox="0 0 10 10"><path d="M2 2h1v6H2zM8 2v6L4 5z" /></svg></button><button aria-label="Vorige"><svg viewBox="0 0 10 10"><path d="M7 2v6L3 5z" /></svg></button><button class="live" aria-label="Nächste"><svg viewBox="0 0 10 10"><path d="M3 1v8l5-4z" /></svg></button><button class="live" aria-label="Letzte"><svg viewBox="0 0 10 10"><path d="M1 1v8l5-4zM7 1h2v8H7z" /></svg></button></span>
        </div>
      </section>
    </main>

    <footer>
      <span class="mode">Arbeitsebene</span>
      <button v-for="s in snaps" :key="s[0]" :class="{ on: s[1] }">{{ s[0] }}</button>
      <span class="cs">KS: Globales XYZ</span><span class="plane">Ebene: XY</span><span class="xyz">X: &nbsp;-13.187 m</span><span class="xyz">Y: &nbsp;12.733 m</span><span class="xyz">Z: &nbsp;0.000 m</span>
    </footer>
  </div>
</template>

<style>
html, body, #app { height: 100%; }
body { margin: 0; background: #d0d4de; }
</style>

<style scoped>
* { box-sizing: border-box; }
.window { display: flex; flex-direction: column; height: 100vh; overflow: hidden; border: solid #4a90d0; border-width: 0 2px 0 2px; background: #d0d4de; color: #222; font: 5px/8px "Open Sans", "Noto Sans", sans-serif; }
button { margin: 0; padding: 0; border: 0; background: none; color: inherit; font: inherit; display: flex; align-items: center; justify-content: center; white-space: nowrap; flex: none; }
h1, h2 { margin: 0; font: inherit; flex: 1; white-space: nowrap; }
svg { display: block; }
.title { display: flex; align-items: center; height: 14px; margin: 0 -2px; flex: none; background: #0078d7; color: #fff; padding: 0 2px 0 5px; }
.logo { width: 7px; height: 7px; margin-right: 2px; }
.title button { width: 20px; }
.title button svg { width: 6px; height: 6px; fill: none; stroke: #fff; stroke-width: 2; }
.menu { display: flex; align-items: center; height: 11px; flex: none; padding-left: 2px; gap: 6px; color: #2c313b; }
.menu-logo { width: 8px; height: 6px; }
.mdi { margin-left: auto; display: flex; gap: 1px; padding-right: 1px; }
.mdi svg { width: 6px; height: 6px; fill: none; stroke: #555; stroke-width: 2; }
.toolbar { display: flex; height: 12px; flex: none; align-items: center; }
.toolbar + .toolbar { height: 11px; }
.strip { display: flex; align-items: center; height: 11px; background: linear-gradient(#f4f6fa, #dfe3ec); border-radius: 2px; padding-right: 2px; }
.grip { width: 5px; height: 8px; border-left: 1px solid #c0c5cf; flex: none; }
.sep { width: 3px; height: 7px; border-left: 1px solid #b8bdc8; flex: none; }
.tool { width: 10px; height: 9px; }
.tool svg { width: 8px; height: 8px; stroke-width: 1.500; }
.pressed { background: #ffd48a; box-shadow: inset 0 0 0 1px #e8b05a; }
.drop { width: 6px; height: 8px; }
.drop::after { content: ""; border: 1px solid transparent; border-top: 2px solid #444; border-bottom: 0; }
.loadcase { appearance: none; width: 98px; height: 9px; margin: 0 1px; padding: 0 2px; border: 0; border-radius: 0; color: #222; font: inherit; background: linear-gradient(#555, #555) 94px 4px / 2px 1px no-repeat, linear-gradient(#e4e7ee, #e4e7ee) 92px 0 / 6px 9px no-repeat, #fff; }
main { display: flex; flex: 1; min-height: 0; border-top: 1px solid #8f949c; }
aside { width: 143px; flex: none; display: flex; flex-direction: column; border-right: 2px solid #a9b3c4; min-height: 0; background: #d0d7e4; }
.caption { display: flex; align-items: center; height: 9px; flex: none; background: #b9c1cc; padding: 0 1px 0 0; color: #30353e; }
.caption button { width: 7px; }
.caption svg { width: 5px; height: 5px; fill: none; stroke: #4a505a; stroke-width: 1.500; }
.navigator { display: flex; flex: 1; min-height: 0; background: #fcfbf4; }
.tree { flex: 1; min-width: 0; margin: 0; padding: 0 0 0 1px; list-style: none; display: grid; grid-auto-rows: minmax(0, 1fr); overflow: hidden; color: #000; }
.tree li { display: flex; align-items: center; overflow: hidden; white-space: nowrap; min-width: 0; background-repeat: no-repeat; }
.l1 .label { font-weight: 700; }
.l2 { padding-left: 9px; background: linear-gradient(#dcdcdc, #dcdcdc) 13px 0 / 1px 100%; }
.l3 { padding-left: 17px; background: linear-gradient(#dcdcdc, #dcdcdc) 13px 0 / 1px 100%, linear-gradient(#c8c8c8, #c8c8c8) 21px 0 / 1px 100%; }
.l4 { padding-left: 25px; background: linear-gradient(#dcdcdc, #dcdcdc) 13px 0 / 1px 100%, linear-gradient(#c8c8c8, #c8c8c8) 21px 0 / 1px 100%, linear-gradient(#c8c8c8, #c8c8c8) 30px 0 / 1px 100%; }
.toggle { width: 9px; align-self: stretch; flex: none; display: flex; align-items: center; padding-left: 2px; }
.stub { background: linear-gradient(#c8c8c8, #c8c8c8) right 50% / 4px 1px no-repeat; }
.toggle button { background: #fff; border: 1px solid #a9b2c2; width: 5px; height: 5px; }
.toggle svg { width: 3px; height: 3px; stroke: #3355aa; stroke-width: 2.500; overflow: visible; }
.node { width: 7px; height: 7px; margin-right: 3px; flex: none; }
.vscroll { width: 7px; flex: none; display: flex; flex-direction: column; background: #f0f0f0; }
.vscroll button, .hscroll button { width: 7px; height: 7px; }
.vscroll svg, .hscroll svg { width: 5px; height: 5px; fill: none; stroke: #444; stroke-width: 2.500; }
.thumb { background: #cdcdcd; height: 7px; }
.tree-thumb { height: 43%; }
.end { margin-top: auto; }
.hscroll { display: flex; height: 7px; flex: none; background: #f0f0f0; padding-right: 7px; }
.hscroll .end { margin: 0 0 0 auto; }
.hthumb { width: 47px; background: #cdcdcd; }
.views { display: flex; gap: 4px; height: 13px; flex: none; padding: 1px 0 2px 1px; color: #34404f; }
.views button { gap: 1px; padding: 0 1px; }
.views svg { width: 8px; height: 8px; }
.views .on { background: #f3f5fa; }
.work { flex: 1; min-width: 0; display: flex; flex-direction: column; background: #f0f0f0; margin-left: 1px; }
.view { flex: 1; min-height: 0; background: #fff; border-left: 1px solid #b0b0b0; }
.view svg { width: 100%; height: 100%; }
.axis { font: 5px "Liberation Sans", sans-serif; }
.data-caption { border-top: 2px solid #d8dde6; height: 11px; padding-left: 2px; }
.table-strip { height: 11px; border-radius: 0; padding-left: 3px; flex: none; background: linear-gradient(#edf1f9, #d5dcea); }
.sheet { display: flex; flex: none; border-top: 1px solid #888; padding-left: 2px; font: 6px/8px "Liberation Sans", Arial, sans-serif; }
table { flex: 1; border-collapse: collapse; table-layout: fixed; color: #222; min-width: 0; width: 0; }
.c0 { width: 24px; } .ca { width: 44px; } .cb { width: 39px; } .cc { width: 49px; } .cd { width: 42px; }
th, td { padding: 0; font-weight: 400; height: 9px; line-height: 7px; border-right: 1px solid #c4c4c4; white-space: nowrap; overflow: hidden; }
thead th { background: #f0f0f0; height: 9px; }
.letters th { background: #e4e4e4; height: 8px; border-bottom: 1px solid #999; border-top: 1px solid #aaa; }
.letters .corner { background: #e6e6e6; line-height: 8px; border-bottom: 1px solid #999; }
.letters .sel { background: #0078d7; color: #fff; }
.units th { border-bottom: 1px solid #bbb; }
.units .open { border-right-color: #f0f0f0; }
tbody td { background: #fff; border-bottom: 1px solid #d4d4d4; padding: 0 1px 0 2px; height: 9px; }
tbody th { background: #e6e6e6; border-bottom: 1px solid #aaa; }
.current td { background: #ebebeb; }
.current td:nth-child(2) { outline: 1px solid #777; outline-offset: -1px; }
.current th { background: #0078d7; color: #fff; }
.num { text-align: right; } .center { text-align: center; }
.sheets { display: flex; flex: none; height: 9px; margin: 8px 0 9px; border-top: 1px solid #777; font: 5px/7px "Liberation Sans", Arial, sans-serif; padding-left: 1px; }
.sheets > button { padding: 0 1px; border: solid #888; border-width: 0 1px 1px 0; border-radius: 0 0 2px 2px; background: #f0f0f0; }
.sheets .on { background: #fff; }
.pager { display: flex; margin-left: auto; }
.pager button { width: 7px; border-right: 1px solid #bbb; background: #fff; }
.pager svg { width: 5px; height: 5px; fill: #999; }
.pager .live svg { fill: #000; }
footer { display: flex; align-items: center; height: 9px; flex: none; margin: 0 -2px; background: linear-gradient(#b4bcc6, #929eac); padding: 0 6px 0 2px; font: 5px/7px "Liberation Sans", Arial, sans-serif; color: #1c222a; white-space: nowrap; }
.mode { width: 364px; }
footer button { padding: 0 2px; height: 8px; }
footer button.on { box-shadow: inset 1px 1px 0 #68727e, inset -1px -1px 0 #c8d0d8; }
.cs { margin-left: auto; width: 42px; } .plane { width: 38px; } .xyz { width: 34px; }
</style>
